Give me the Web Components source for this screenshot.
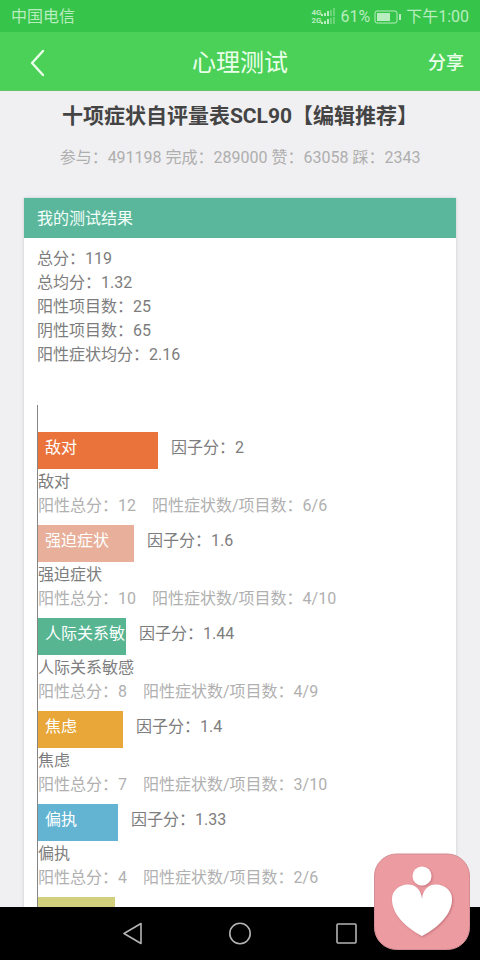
<!DOCTYPE html>
<html lang="zh-CN">
<head>
<meta charset="utf-8">
<meta name="viewport" content="width=device-width, initial-scale=1">
<title>心理测试</title>
<style>
html, body { margin: 0; height: 100%; }
body { font: 16px/24px Roboto, "Noto Sans CJK SC", sans-serif; color: #7d7d7d; background: #f0f0f2; overflow: hidden; }
</style>
</head>
<body>
<test-app></test-app>
<script>
function define(name, html, setup) {
  const template = document.createElement('template');
  template.innerHTML = html;
  customElements.define(name, class extends HTMLElement {
    connectedCallback() {
      if (this.shadowRoot) return;
      const root = this.attachShadow({ mode: 'open' });
      root.append(template.content.cloneNode(true));
      if (setup) setup(this, root);
    }
  });
}

define('status-bar', `
<style>
:host { display: flex; align-items: center; justify-content: space-between; height: 32px; padding: 1px 11px 0; background: #36c44b; color: #b9edbf; box-sizing: border-box; }
.right { display: flex; align-items: center; gap: 4px; }
svg { display: block; }
.net { display: flex; align-items: center; }
.gen { font: bold 8px/8px Roboto, sans-serif; display: grid; }
</style>
<span>中国电信</span>
<div class="right">
  <div class="net">
    <span class="gen"><span>4G</span><span>2G</span></span>
    <svg width="15" height="17" viewBox="0 0 15 17" fill="currentColor">
      <path d="M0 6h2v2H0zM3 5h2v3H3zM6 3h2v5H6zM0 14h2v2H0zM3 13h2v3H3zM6 11h2v5H6z"/>
      <path opacity=".4" d="M9 2h2v6H9zM12 0h2v8h-2zM9 10h2v6H9zM12 9h2v7h-2z"/>
    </svg>
  </div>
  <span>61%</span>
  <svg width="28" height="14" viewBox="0 0 28 14" fill="none" stroke="currentColor">
    <rect x="1" y="1" width="22" height="12" rx="2"/><rect x="3" y="3" width="13" height="8" fill="currentColor" stroke="none"/><path d="M26 4v6" stroke-width="2"/>
  </svg>
  <span>下午1:00</span>
</div>`);

define('title-bar', `
<style>
:host { display: grid; grid-template-columns: 1fr auto 1fr; align-items: center; height: 59px; padding: 3px 16px 0; background: #4bd058; color: #eaffea; box-sizing: border-box; border-bottom: 1px solid #62c467; }
h1 { margin: 0; font-size: 24px; line-height: 32px; font-weight: 400; }
button { font: inherit; color: inherit; background: none; border: 0; padding: 0; }
.back { justify-self: start; padding: 0 14px; }
.share { justify-self: end; font-size: 18px; font-weight: 500; }
svg { display: block; }
</style>
<button class="back" aria-label="返回"><svg width="15" height="28" viewBox="0 0 15 28" fill="none" stroke="currentColor" stroke-width="2.4" stroke-linecap="round" stroke-linejoin="round"><path d="M13 2 2 14l11 12"/></svg></button>
<h1><slot></slot></h1>
<button class="share">分享</button>`);

define('test-heading', `
<style>
:host { display: block; padding: 11px 24px 28px; text-align: center; }
h2 { margin: 0; font-size: 21px; line-height: 28px; font-weight: 700; color: #444; }
p { margin: 16px 0 0; color: #aeaeae; }
</style>
<h2><slot></slot></h2>
<p><slot name="stats"></slot></p>`);

define('result-card', `
<style>
:host { display: block; margin: 0 24px; background: #fff; box-shadow: 0 0 3px #c8c8cc; }
h3 { margin: 0; padding: 9px 13px 7px; background: #5bb79b; color: #f4fffb; font-size: 16px; line-height: 24px; font-weight: 400; }
.body { padding: 9px 13px; }
</style>
<h3><slot name="title"></slot></h3>
<div class="body"><slot></slot></div>`);

define('score-summary', `
<style>
:host { display: block; }
ul { margin: 0; padding: 0; list-style: none; }
</style>
<ul><li>总分：119</li><li>总均分：1.32</li><li>阳性项目数：25</li><li>阴性项目数：65</li><li>阳性症状均分：2.16</li></ul>`);

define('factor-chart', `
<style>
:host { display: block; margin-top: 38px; padding-top: 27px; border-left: 1px solid #858585; }
</style>
<slot></slot>`);

define('factor-row', `
<style>
:host { display: block; margin-bottom: 7px; }
.line { display: flex; gap: 13px; }
.bar { box-sizing: border-box; height: 37px; padding: 4px 0 0 7px; white-space: nowrap; color: #fff; width: var(--length); background: var(--tone); }
.score { padding-top: 4px; }
.name { padding-top: 1px; }
.detail { display: flex; gap: 16px; color: #b0b0b0; }
</style>
<div class="line"><div class="bar"></div><div class="score"></div></div>
<div class="name"></div>
<div class="detail"><span class="total"></span><span class="count"></span></div>`,
(host, root) => {
  const { name, label, score, length, tone, total, count } = host.dataset;
  host.style.setProperty('--length', length + 'px');
  host.style.setProperty('--tone', tone);
  if (!name) return;
  root.querySelector('.bar').textContent = label || name;
  root.querySelector('.score').textContent = '因子分：' + score;
  root.querySelector('.name').textContent = name;
  root.querySelector('.total').textContent = '阳性总分：' + total;
  root.querySelector('.count').textContent = '阳性症状数/项目数：' + count;
});

define('nav-bar', `
<style>
:host { display: flex; justify-content: center; align-items: center; gap: 79px; height: 53px; background: #000; color: #b4b4b4; }
button { padding: 0; border: 0; background: none; color: inherit; }
svg { display: block; }
</style>
<button aria-label="返回"><svg width="28" height="28" viewBox="0 0 28 28" fill="none" stroke="currentColor" stroke-width="1.600" stroke-linejoin="round"><path d="M22 3.500v20L5 13.500z"/></svg></button>
<button aria-label="主页"><svg width="28" height="28" viewBox="0 0 28 28" fill="none" stroke="currentColor" stroke-width="1.600"><circle cx="14" cy="13.500" r="10.200"/></svg></button>
<button aria-label="最近任务"><svg width="28" height="28" viewBox="0 0 28 28" fill="none" stroke="currentColor" stroke-width="1.600"><rect x="4" y="4" width="19" height="19" rx="1"/></svg></button>`);

define('heart-badge', `
<style>
:host { position: absolute; right: 10px; bottom: 10px; }
svg { display: block; }
</style>
<svg width="96" height="97" viewBox="0 0 96 97" role="img" aria-label="爱心">
  <defs><filter id="s" x="-20%" y="-20%" width="140%" height="140%"><feDropShadow dx="1" dy="1" stdDeviation="1" flood-color="#a8545e" flood-opacity=".6"/></filter></defs>
  <rect x=".5" y="1" width="95" height="95.500" rx="22" fill="#ec9ba1" stroke="#d28d93"/>
  <g fill="#fff" filter="url(#s)"><circle cx="48" cy="23" r="9.500"/><path d="M48 46C47 36 41 31.500 34 31.500 25 31.500 18 38 18 46 18 61 31 74 48 83 65 74 78 61 78 46 78 38 71 31.500 62 31.500 55 31.500 49 36 48 46z"/></g>
</svg>`);

define('test-app', `
<style>
:host { display: flex; flex-direction: column; position: relative; height: 100vh; }
main { flex: 1; min-height: 0; overflow: hidden; }
status-bar, title-bar, nav-bar { flex: none; }
</style>
<status-bar></status-bar>
<title-bar>心理测试</title-bar>
<main>
  <test-heading>十项症状自评量表SCL90【编辑推荐】<span slot="stats">参与：491198 完成：289000 赞：63058 踩：2343</span></test-heading>
  <result-card>
    <span slot="title">我的测试结果</span>
    <score-summary></score-summary>
    <factor-chart>
      <factor-row data-name="敌对" data-score="2" data-length="120" data-tone="#ea733c" data-total="12" data-count="6/6"></factor-row>
      <factor-row data-name="强迫症状" data-score="1.6" data-length="96" data-tone="#e8b09a" data-total="10" data-count="4/10"></factor-row>
      <factor-row data-name="人际关系敏感" data-label="人际关系敏" data-score="1.44" data-length="88" data-tone="#57b592" data-total="8" data-count="4/9"></factor-row>
      <factor-row data-name="焦虑" data-score="1.4" data-length="85" data-tone="#e8a738" data-total="7" data-count="3/10"></factor-row>
      <factor-row data-name="偏执" data-score="1.33" data-length="80" data-tone="#62b4d2" data-total="4" data-count="2/6"></factor-row>
      <factor-row data-length="77" data-tone="#d2d07c"></factor-row>
    </factor-chart>
  </result-card>
</main>
<nav-bar></nav-bar>
<heart-badge></heart-badge>`);
</script>
</body>
</html>
